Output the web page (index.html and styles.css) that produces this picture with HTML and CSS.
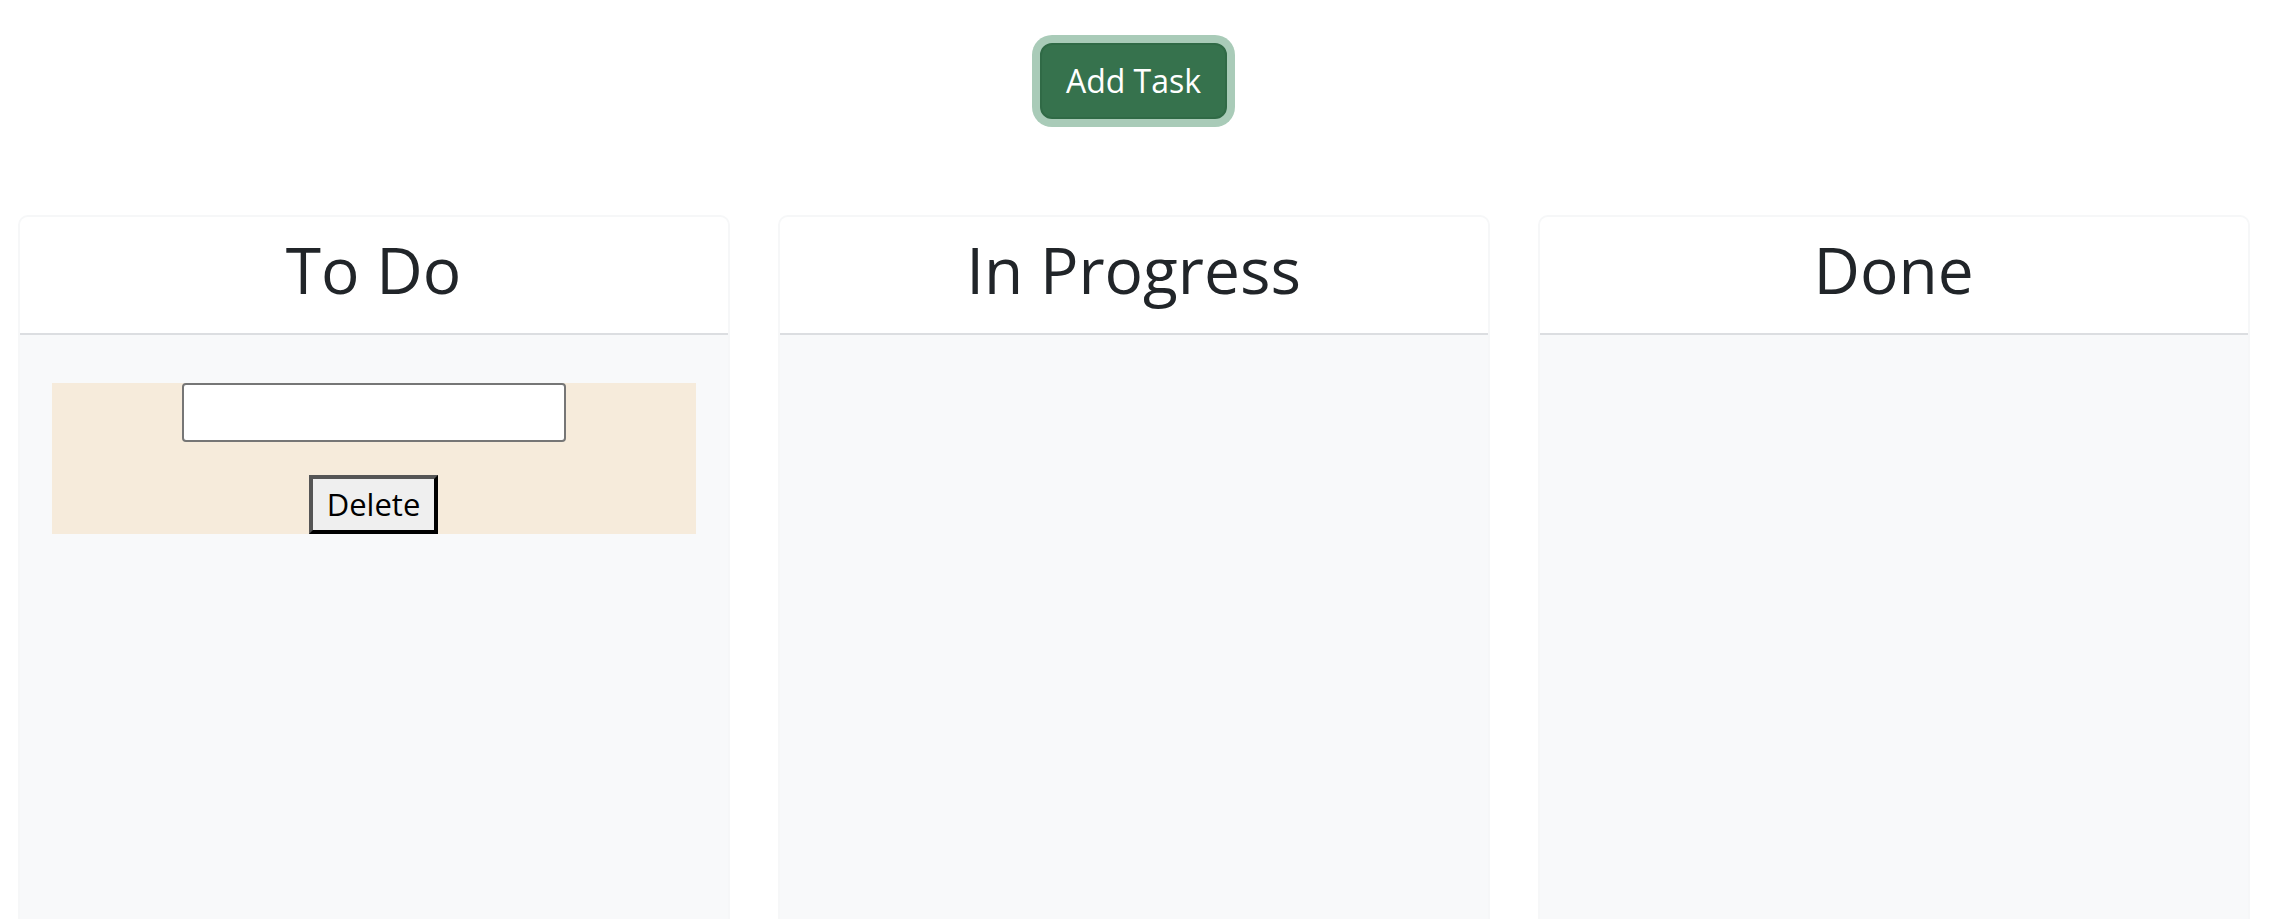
FILE: index.html
```html
<!DOCTYPE html>
<html lang="en">
<head>
<meta charset="utf-8">
<title>Task Board</title>
<link rel="stylesheet" href="styles.css">
</head>
<body>
<div class="page">
  <div class="toolbar">
    <button class="add-btn" type="button">Add Task</button>
  </div>
  <div class="board">
    <section class="column">
      <header class="column-header"><h2 class="column-title">To Do</h2></header>
      <div class="column-body">
        <div class="task">
          <input class="task-input" type="text">
          <button class="task-delete" type="button">Delete</button>
        </div>
      </div>
    </section>
    <section class="column">
      <header class="column-header"><h2 class="column-title">In Progress</h2></header>
      <div class="column-body"></div>
    </section>
    <section class="column">
      <header class="column-header"><h2 class="column-title">Done</h2></header>
      <div class="column-body"></div>
    </section>
  </div>
</div>
</body>
</html>
```

FILE: styles.css
```css
html, body {
  margin: 0;
  padding: 0;
  background: #ffffff;
  overflow: hidden;
}

body {
  font-family: "Open Sans", "Liberation Sans", sans-serif;
  color: #212529;
}

.page {
  width: 2267px;
}

.toolbar {
  display: flex;
  justify-content: center;
  padding-top: 43px;
}

.add-btn {
  font-family: "Open Sans", "Liberation Sans", sans-serif;
  font-size: 32px;
  line-height: 48px;
  padding: 12px 24px;
  color: #ffffff;
  background: #36724d;
  border: 2px solid #306a46;
  border-radius: 12px;
  box-shadow: 0 0 0 8px #a9cbb8;
  cursor: pointer;
}

.board {
  display: grid;
  grid-template-columns: repeat(3, 712px);
  column-gap: 48px;
  justify-content: center;
  margin-top: 96px;
}

.column {
  display: flex;
  flex-direction: column;
  border: 2px solid #f6f7f8;
  border-radius: 10px;
  overflow: hidden;
  min-height: 900px;
  background: #f8f9fa;
}

.column-header {
  background: #ffffff;
  border-bottom: 2px solid #dcdee1;
  padding: 13px 0 24px;
  text-align: center;
}

.column-title {
  margin: 0;
  font-weight: 400;
  font-size: 64px;
  line-height: 79px;
}

.column-body {
  flex: 1;
  background: #f8f9fa;
  padding: 48px 32px;
}

.task {
  display: flex;
  flex-direction: column;
  align-items: center;
  gap: 33px;
  background: #f6ebdb;
}

.task-input {
  box-sizing: border-box;
  width: 384px;
  height: 59px;
  margin: 0;
  border: 2px solid #767676;
  border-radius: 4px;
  background: #ffffff;
  font-family: "Open Sans", "Liberation Sans", sans-serif;
  font-size: 26px;
}

.task-delete {
  margin: 0;
  padding: 0 14px;
  font-family: "Open Sans", "Liberation Sans", sans-serif;
  font-size: 31px;
  line-height: 51px;
  color: #000000;
  background: #efefef;
  border-width: 4px;
  border-style: solid;
  border-color: #555555 #000000 #000000 #555555;
  border-radius: 0;
}
```
